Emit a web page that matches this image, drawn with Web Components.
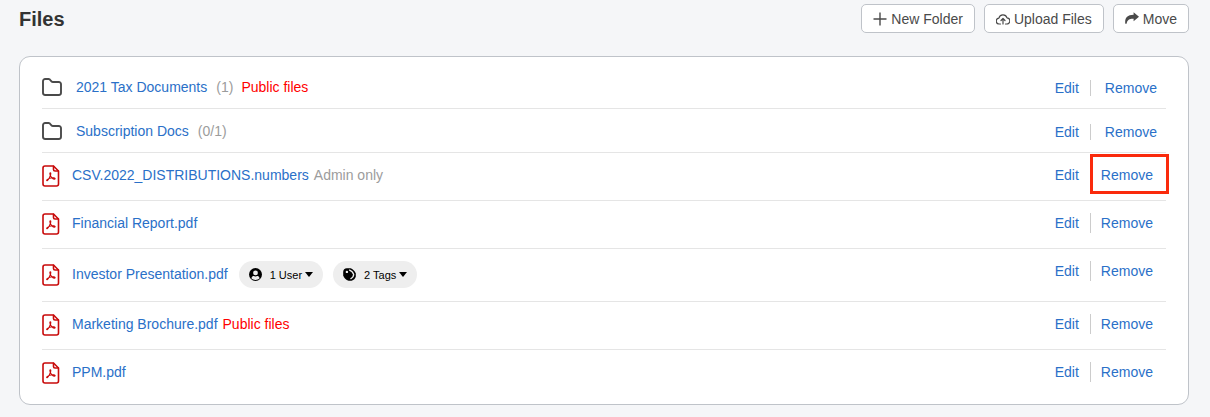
<!DOCTYPE html>
<html lang="en">
<head>
<meta charset="utf-8">
<meta name="viewport" content="width=device-width, initial-scale=1">
<title>Files</title>
<style>
  body {
    margin: 0;
    background: #f5f6f8;
    color: #4a4a4a;
    font-family: "Liberation Sans", Helvetica, Arial, sans-serif;
    font-size: 14px;
    line-height: 20px;
  }
</style>
</head>
<body>
<files-page>
  <tool-button slot="tools" icon="plus">New Folder</tool-button>
  <tool-button slot="tools" icon="upload">Upload Files</tool-button>
  <tool-button slot="tools" icon="move">Move</tool-button>

  <file-row type="folder" name="2021 Tax Documents" count="(1)" access="public">Public files</file-row>
  <file-row type="folder" name="Subscription Docs" count="(0/1)"></file-row>
  <file-row type="pdf" name="CSV.2022_DISTRIBUTIONS.numbers" access="admin" highlight>Admin only</file-row>
  <file-row type="pdf" name="Financial Report.pdf"></file-row>
  <file-row type="pdf" name="Investor Presentation.pdf">
    <share-pill slot="pills" icon="user">1 User</share-pill>
    <share-pill slot="pills" icon="tag">2 Tags</share-pill>
  </file-row>
  <file-row type="pdf" name="Marketing Brochure.pdf" access="public">Public files</file-row>
  <file-row type="pdf" name="PPM.pdf"></file-row>
</files-page>

<script>
const ICONS = {
  plus: `<svg width="14" height="14" viewBox="0 0 14 14" fill="none" stroke="currentColor" stroke-width="1.4"><path d="M7 .5v13M.5 7h13"/></svg>`,
  upload: `<svg width="14" height="14" viewBox="0 0 14 14" fill="none" stroke="currentColor" stroke-width="1.2" stroke-linecap="round" stroke-linejoin="round"><path d="M4.5 12H3.4A2.9 2.9 0 0 1 2.900 6.200 4.200 4.200 0 0 1 11 5.900a3 3 0 0 1-.4 6.100H9.500"/><path d="M7 12V6.700M5 8.500 7 6.500l2 2"/></svg>`,
  move: `<svg width="14" height="14" viewBox="0 0 14 14" fill="currentColor"><path d="M8.600 .3 14 4.700 8.600 9.200V6.800C5.200 6.600 2.200 7.400 1.600 11.800H.3C-.4 6.400 1.800 2.900 8.600 2.700Z"/></svg>`,
  folder: `<svg width="20" height="18" viewBox="0 0 20 18" fill="none" stroke="#4a4a4a" stroke-width="1.9" stroke-linejoin="round"><path d="M1 3.200A2.200 2.200 0 0 1 3.200 1H6.600C7.800 1 8.200 1.700 8.700 2.500 9.200 3.400 9.700 4 10.800 4H16.800A2.200 2.200 0 0 1 19 6.200V14.800A2.200 2.200 0 0 1 16.800 17H3.200A2.200 2.200 0 0 1 1 14.800Z"/></svg>`,
  pdf: `<svg width="18" height="22" viewBox="0 0 18 22" fill="none" stroke="#c80a0a" stroke-linejoin="round" stroke-linecap="round"><path stroke-width="1.6" d="M11.500 1H3A2 2 0 0 0 1 3V19A2 2 0 0 0 3 21H14.500A2 2 0 0 0 16.500 19V6Z"/><path stroke-width="1.6" d="M11.500 1.200V4.500A1.500 1.500 0 0 0 13 6H16.300"/><path stroke-width="1.1" d="M8.300 7.700C7.700 7.700 7.800 9 8.300 10.200 9 12 11 14 12.600 14.100 13.400 14.100 13.300 13 12 12.800 9.500 12.600 6.500 13.400 5.100 14.600 4.200 15.500 4.700 16 5.400 15.500 6.700 14.500 8.700 10.700 8.800 8.600 8.800 8 8.700 7.700 8.300 7.700Z"/></svg>`,
  user: `<svg width="13" height="13" viewBox="0 0 13 13"><circle cx="6.5" cy="6.5" r="6.5" fill="#000"/><circle cx="6.5" cy="4.9" r="2.4" fill="#eee"/><path fill="#eee" d="M2.400 10.200C2.700 8.600 3.900 8 4.700 8 5.800 8.600 7.200 8.600 8.300 8 9.100 8 10.300 8.600 10.600 10.200 8.700 12.500 4.300 12.500 2.400 10.200Z"/></svg>`,
  tag: `<svg width="13" height="13" viewBox="0 0 13 13"><path fill="#000" d="M3.800 .2H7.600C9.600 .8 12 3 12.800 5.400V8.600C12.200 10.800 10.800 12.200 8.600 12.800H5.600C3 12 .9 9.800 .2 7.400V3.800C.3 1.600 1.600 .3 3.800 .2Z"/><circle cx="3.9" cy="3.9" r="1.2" fill="#eee"/><path fill="none" stroke="#eee" stroke-width="1.3" d="M6.200 1.900C8 2.600 10.200 4.800 10.700 6.500 10.700 8 9.300 9.800 7.500 10.900"/></svg>`
};

class FilesPage extends HTMLElement {
  constructor() {
    super();
    this.attachShadow({ mode: 'open' });
  }

  connectedCallback() {
    this.shadowRoot.innerHTML = `
      <style>
        :host { display: block; padding: 4px 21px 12px 19px; }
        header { display: flex; justify-content: space-between; align-items: center; margin-bottom: 23px; }
        h1 { margin: 0; color: #333; font-size: 20px; line-height: 28px; }
        .tools { display: flex; gap: 9px; }
        main {
          background: #fff;
          border: 1px solid #bfc3c9;
          border-radius: 11px;
          padding: 8px 22px 7px;
        }
      </style>
      <header>
        <h1>Files</h1>
        <div class="tools"><slot name="tools"></slot></div>
      </header>
      <main><slot></slot></main>
    `;
  }
}

class ToolButton extends HTMLElement {
  constructor() {
    super();
    this.attachShadow({ mode: 'open' });
  }

  connectedCallback() {
    this.shadowRoot.innerHTML = `
      <style>
        :host { display: block; }
        button {
          display: flex;
          align-items: center;
          gap: 4px;
          height: 29px;
          padding: 0 11px;
          border: 1px solid #bfc3c9;
          border-radius: 5px;
          background: #fff;
          color: #4a4a4a;
          font: inherit;
          white-space: nowrap;
          cursor: pointer;
        }
        svg { display: block; }
      </style>
      <button type="button">${ICONS[this.getAttribute('icon')]}<slot></slot></button>
    `;
  }
}

class SharePill extends HTMLElement {
  constructor() {
    super();
    this.attachShadow({ mode: 'open' });
  }

  connectedCallback() {
    this.shadowRoot.innerHTML = `
      <style>
        :host { display: block; }
        button {
          display: flex;
          align-items: center;
          height: 27px;
          padding: 0 10px;
          border: 0;
          border-radius: 14px;
          background: #eee;
          color: #000;
          font: inherit;
          font-size: 11px;
          white-space: nowrap;
          cursor: pointer;
        }
        svg { display: block; margin-right: 8px; }
        .caret {
          margin-left: 3px;
          border: 4px solid transparent;
          border-top: 5px solid #000;
          border-bottom: 0;
        }
      </style>
      <button type="button">${ICONS[this.getAttribute('icon')]}<slot></slot><span class="caret"></span></button>
    `;
  }
}

class FileRow extends HTMLElement {
  constructor() {
    super();
    this.attachShadow({ mode: 'open' });
  }

  connectedCallback() {
    const type = this.getAttribute('type');
    const name = this.getAttribute('name');
    const count = this.getAttribute('count');

    this.shadowRoot.innerHTML = `
      <style>
        :host {
          display: flex;
          justify-content: space-between;
          align-items: flex-start;
          padding: 12px 0 13px;
          border-bottom: 1px solid #e5e5e5;
        }
        :host(:last-of-type) { border-bottom: 0; }
        :host([type='folder']) { padding: 11px 0 10px; }
        a { color: #2a70c8; text-decoration: none; }
        a:hover { text-decoration: underline; }
        svg { display: block; }
        .entry { display: flex; align-items: center; min-height: 22px; }
        .label { display: flex; margin-left: 12px; padding-bottom: 2px; }
        :host([type='folder']) .label { margin-left: 14px; padding-bottom: 0; }
        .count { margin: 0 8px 0 9px; color: #9c9c9c; }
        .access { margin-left: 5px; color: #9c9c9c; }
        :host([type='folder']) .access { margin-left: 0; }
        :host([access='public']) .access { color: #f00; }
        .pills { display: flex; gap: 10px; margin-left: 6px; }
        .actions { display: flex; align-items: center; }
        .actions a { position: relative; }
        .remove { margin: 0 13px 0 10px; }
        .separator { width: 1px; height: 20px; margin-left: 11px; background: #ccc; }
        /* folder actions sit a little lower and further right */
        :host([type='folder']) .actions { padding-top: 2px; }
        :host([type='folder']) .separator { height: 16px; }
        :host([type='folder']) .remove { margin: 0 9px 0 14px; }
        :host([highlight]) .remove::after {
          content: '';
          position: absolute;
          inset: -11px -16px -9px -11px;
          border: 3px solid #fa2a0c;
          pointer-events: none;
        }
      </style>
      <div class="entry">
        ${ICONS[type]}
        <div class="label">
          <a href="#">${name}</a>
          ${count ? `<span class="count">${count}</span>` : ''}
          <span class="access"><slot></slot></span>
        </div>
        <div class="pills"><slot name="pills"></slot></div>
      </div>
      <div class="actions">
        <a href="#">Edit</a>
        <span class="separator"></span>
        <a class="remove" href="#">Remove</a>
      </div>
    `;
  }
}

customElements.define('files-page', FilesPage);
customElements.define('tool-button', ToolButton);
customElements.define('share-pill', SharePill);
customElements.define('file-row', FileRow);
</script>
</body>
</html>
